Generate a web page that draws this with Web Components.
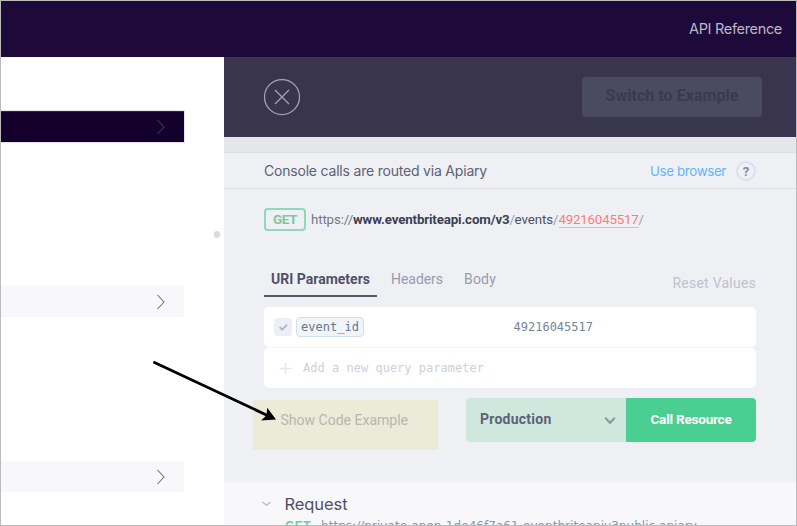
<!DOCTYPE html>
<html lang="en">
<head>
<meta charset="utf-8">
<title>API Reference</title>
<style>
html, body { margin: 0; height: 100%; overflow: hidden; }
body { font-family: Roboto, "Liberation Sans", sans-serif; }
</style>
</head>
<body>
<console-app></console-app>
<script>
const define = (name, html, ready) => customElements.define(name, class extends HTMLElement {
  connectedCallback() {
    if (this.shadowRoot) return;
    const t = document.createElement('template');
    t.innerHTML = html;
    this.attachShadow({ mode: 'open' }).append(t.content.cloneNode(true));
    if (ready) ready(this);
  }
});

/* Text set to a given line width by even letter-spacing. */
define('fit-text', `<style>:host{display:inline-block;white-space:pre}span{display:inline-block}</style><span><slot></slot></span>`, el => {
  const s = el.shadowRoot.querySelector('span');
  const w = parseFloat(el.getAttribute('w'));
  const nodes = el.shadowRoot.querySelector('slot').assignedNodes({ flatten: true });
  const n = nodes.map(x => x.textContent).join('').length;
  const now = s.getBoundingClientRect().width;
  if (w && now && n) { s.style.letterSpacing = ((w - now) / n) + 'px'; el.style.width = w + 'px'; }
});

define('top-bar', `<style>
:host{display:flex;height:56px;box-sizing:border-box;background:#1e0a3a;color:#bcb6c5;justify-content:flex-end;align-items:center;padding-right:14px;font:400 14.5px/20px Inter,sans-serif}
</style><fit-text w="93"><slot></slot></fit-text>`);

define('nav-row', `<style>
:host{display:flex;height:31px;width:183px;box-sizing:border-box;padding-right:18px;background:#f8f8fa;align-items:center;justify-content:flex-end;color:#6f7287}
:host([active]){background:#14002d;color:#3c3a52;box-shadow:0 0 0 1px #e6e2ea;border-top:1px solid #35214a}
</style><svg width="10" height="16" viewBox="0 0 10 16"><path d="M1.5 1 8 8l-6.5 7" fill="none" stroke="currentColor" stroke-width="1.1"/></svg>`);

define('side-nav', `<style>
:host{display:flex;flex-direction:column;width:223px;flex:none;background:#fff;box-sizing:border-box;padding-top:54px;overflow:hidden}
.dot{width:6px;height:7px;border-radius:3px;background:#dadadc;margin:89px 0 48px 213px;flex:none}
.b{margin-top:144px}
nav-row{flex:none}
</style><nav-row active></nav-row><div class="dot"></div><nav-row></nav-row><nav-row class="b"></nav-row>`);

define('panel-head', `<style>
:host{display:flex;height:80px;box-sizing:border-box;background:#3a354e;align-items:center;justify-content:space-between;padding:0 34px 0 39px}
.btn{width:180px;height:40px;border-radius:4px;background:#4a4a60;color:#393b50;display:flex;align-items:center;justify-content:center;font:700 16px/20px Roboto,sans-serif;padding-bottom:2px;box-sizing:border-box}
</style><svg width="38" height="38" viewBox="0 0 38 38" fill="none" stroke="#a3a3b6" stroke-width="1.25"><circle cx="19" cy="19" r="17.5"/><path d="m12 12 14 14M26 12 12 26"/></svg>
<div class="btn"><fit-text w="133"><slot></slot></fit-text></div>`);

define('route-bar', `<style>
:host{display:flex;box-sizing:border-box;height:52px;border-top:15px solid #e5e6ea;padding:0 40px;align-items:center;color:#5d6176;font:400 14px/20px Inter,sans-serif;border-bottom:1px solid #dcdee4;box-shadow:inset 0 1px #dcdee4}
.c{padding-top:2px}
.use{margin-left:auto;color:#5eb7fa;font-size:13.3px;margin-right:10px;padding-top:1px}
.q{width:20px;height:20px;box-sizing:border-box;border:2px solid #d9e0ef;border-radius:50%;color:#8589a0;font:700 13px/17px Roboto,sans-serif;text-align:center;margin-top:1px}
</style><fit-text class="c" w="223">Console calls are routed via Apiary</fit-text><fit-text class="use" w="76">Use browser</fit-text><div class="q">?</div>`);

define('request-url', `<style>
:host{display:flex;align-items:center;height:23px;color:#737789;font:400 13.3px/20px Roboto,sans-serif}
.m{box-sizing:border-box;width:42px;height:23px;border:2px solid #90d9b8;border-radius:4px;color:#7bc8a4;font-weight:700;font-size:13.5px;display:flex;justify-content:center;line-height:19px;margin-right:5px}
b{color:#3d4052}.e{color:#4c4f61}.s{color:#9a9eaf}.id{color:#fb7b76;border-bottom:1px solid #bfc4d6;line-height:15px;}
</style><div class="m"><fit-text w="24">GET</fit-text></div><fit-text w="42">https://</fit-text><b><fit-text w="156.5">www.eventbriteapi.com/v3</fit-text></b><fit-text class="s" w="5">/</fit-text><fit-text class="e" w="38.5">events</fit-text><fit-text class="s" w="5.5">/</fit-text><fit-text class="id" w="80">49216045517</fit-text><fit-text class="s" w="5">/</fit-text>`);

define('tab-strip', `<style>
:host{display:flex;height:35px;margin-top:31px;color:#979bad;font:400 14px/20px Roboto,sans-serif}
.on{box-sizing:border-box;width:113px;height:35px;padding:7px 0 0 7px;border-bottom:2px solid #55586f;color:#4f5268;font-weight:700}
.t{margin:7px 0 0 14px}.t2{margin:7px 0 0 21px}.r{margin:11px 0 0 auto;color:#bfc3cf}
</style><div class="on"><fit-text w="99">URI Parameters</fit-text></div><fit-text class="t" w="52">Headers</fit-text><fit-text class="t2" w="32">Body</fit-text><fit-text class="r" w="83.5">Reset Values</fit-text>`);

define('param-table', `<style>
:host{display:block;margin-top:10px;font:400 12px/16px "DejaVu Sans Mono",monospace;color:#74859b}
.row{display:flex;height:40px;background:#fff;border-radius:5px;align-items:center;box-sizing:border-box;padding-left:10px}
.row+.row{margin-top:1px;padding-left:15px;color:#cdd0d9}
:host{background:linear-gradient(#f4f4f7,#f4f4f7) 4px 40px/calc(100% - 8px) 1px no-repeat}
.ck{width:18px;height:18px;border-radius:4px;background:#eeeff3;margin-right:4px}
.key{box-sizing:border-box;width:68px;height:20px;border:1px solid #d2deea;border-radius:4px;background:#f1f5f8;padding-left:4px;line-height:18px;color:#66788c;margin-right:149.5px}
svg{display:block}.add{margin-left:11px}
</style><div class="row"><div class="ck"><svg width="18" height="18" viewBox="0 0 18 18"><path d="m5.6 9 2.6 2.6L13 6.8" fill="none" stroke="#b1b8c8" stroke-width="2"/></svg></div><div class="key"><fit-text w="58">event_id</fit-text></div><fit-text w="79.5">49216045517</fit-text></div>
<div class="row"><svg width="13" height="13" viewBox="0 0 13 13"><path d="M6.5.5v12M.5 6.5h12" stroke="#e5e7eb" stroke-width="1.7"/></svg><fit-text class="add" w="181">Add a new query parameter</fit-text></div>`);

define('action-row', `<style>
:host{display:flex;margin:10px 0 0 -11px;height:84px;align-items:flex-start;font:700 13.5px/20px Roboto,sans-serif}
.show{width:185px;height:50px;margin:2px 28px 0 0;box-sizing:border-box;background:#ecebd7;color:#b3b8b0;font-weight:400;font-size:14px;padding:10px 0 0 27.5px}
.env,.call{height:44px;box-sizing:border-box;display:flex;align-items:center}
.env{width:160px;background:#cfe8de;color:#5d6279;border-radius:4px 0 0 4px;justify-content:space-between;padding:0 10px 0 14px;font-size:14px}
.call{width:130px;background:#4bce91;color:#fff;border-radius:0 4px 4px 0;justify-content:center}
.call fit-text,.env fit-text{padding-bottom:2px}
</style><div class="show"><fit-text w="127.5">Show Code Example</fit-text></div><div class="env"><fit-text w="71.5">Production</fit-text><svg width="12" height="9" viewBox="0 0 12 9"><path d="m1.2 1.8 4.8 5 4.8-5" fill="none" stroke="#8a9ba1" stroke-width="2.2"/></svg></div><div class="call"><fit-text w="81">Call Resource</fit-text></div>`);

define('request-log', `<style>
:host{display:block;flex:1;background:#f8f8fa;padding:11px 0 0 38px;overflow:hidden}
.h{display:flex;align-items:center;height:22px;color:#4e5166;font:400 16.5px/22px Inter,sans-serif}
svg{margin-right:13.5px}
.u{display:flex;margin:1px 0 0 23px;color:#8698ac;font:400 12px/20px "DejaVu Sans",sans-serif}
.g{color:#5fd3a0;margin-right:10px;font-weight:700;font-family:"Liberation Sans",sans-serif}
</style><div class="h"><svg width="9" height="6" viewBox="0 0 9 6"><path d="M.5 1 4.5 4.4 8.5 1" fill="none" stroke="#b3c2d0" stroke-width="1.4"/></svg><fit-text w="63">Request</fit-text></div><div class="u"><fit-text class="g" w="26">GET</fit-text><fit-text w="376">https://private-anon-1de46f7a61-eventbriteapiv3public.apiary</fit-text></div>`);

define('api-console', `<style>
:host{display:flex;flex-direction:column;flex:1;min-width:0;background:#eff0f4}
.body{padding:19px 40px 0;flex:none}
panel-head,route-bar{flex:none}
</style><panel-head>Switch to Example</panel-head><route-bar></route-bar><div class="body"><request-url></request-url><tab-strip></tab-strip><param-table></param-table><action-row></action-row></div><request-log></request-log>`);

define('pointer-arrow', `<style>:host{position:absolute;left:0;top:0;pointer-events:none}svg{display:block}</style>
<svg width="300" height="440" viewBox="0 0 300 440"><path d="M154.5 362.5 268 415.7" stroke="#000" stroke-width="2.8" stroke-linecap="round"/><path d="m276 419.6-8.8-11.8-.6 7.4-5.5 5.3z"/></svg>`);

define('console-app', `<style>
:host{display:flex;flex-direction:column;width:797px;height:526px;box-sizing:border-box;border:1px solid #bbbbbd;overflow:hidden;background:#fff}
main{display:flex;flex:1;min-height:0}
top-bar{flex:none}
</style><top-bar>API Reference</top-bar><main><side-nav></side-nav><api-console></api-console></main><pointer-arrow></pointer-arrow>`);
</script>
</body>
</html>
